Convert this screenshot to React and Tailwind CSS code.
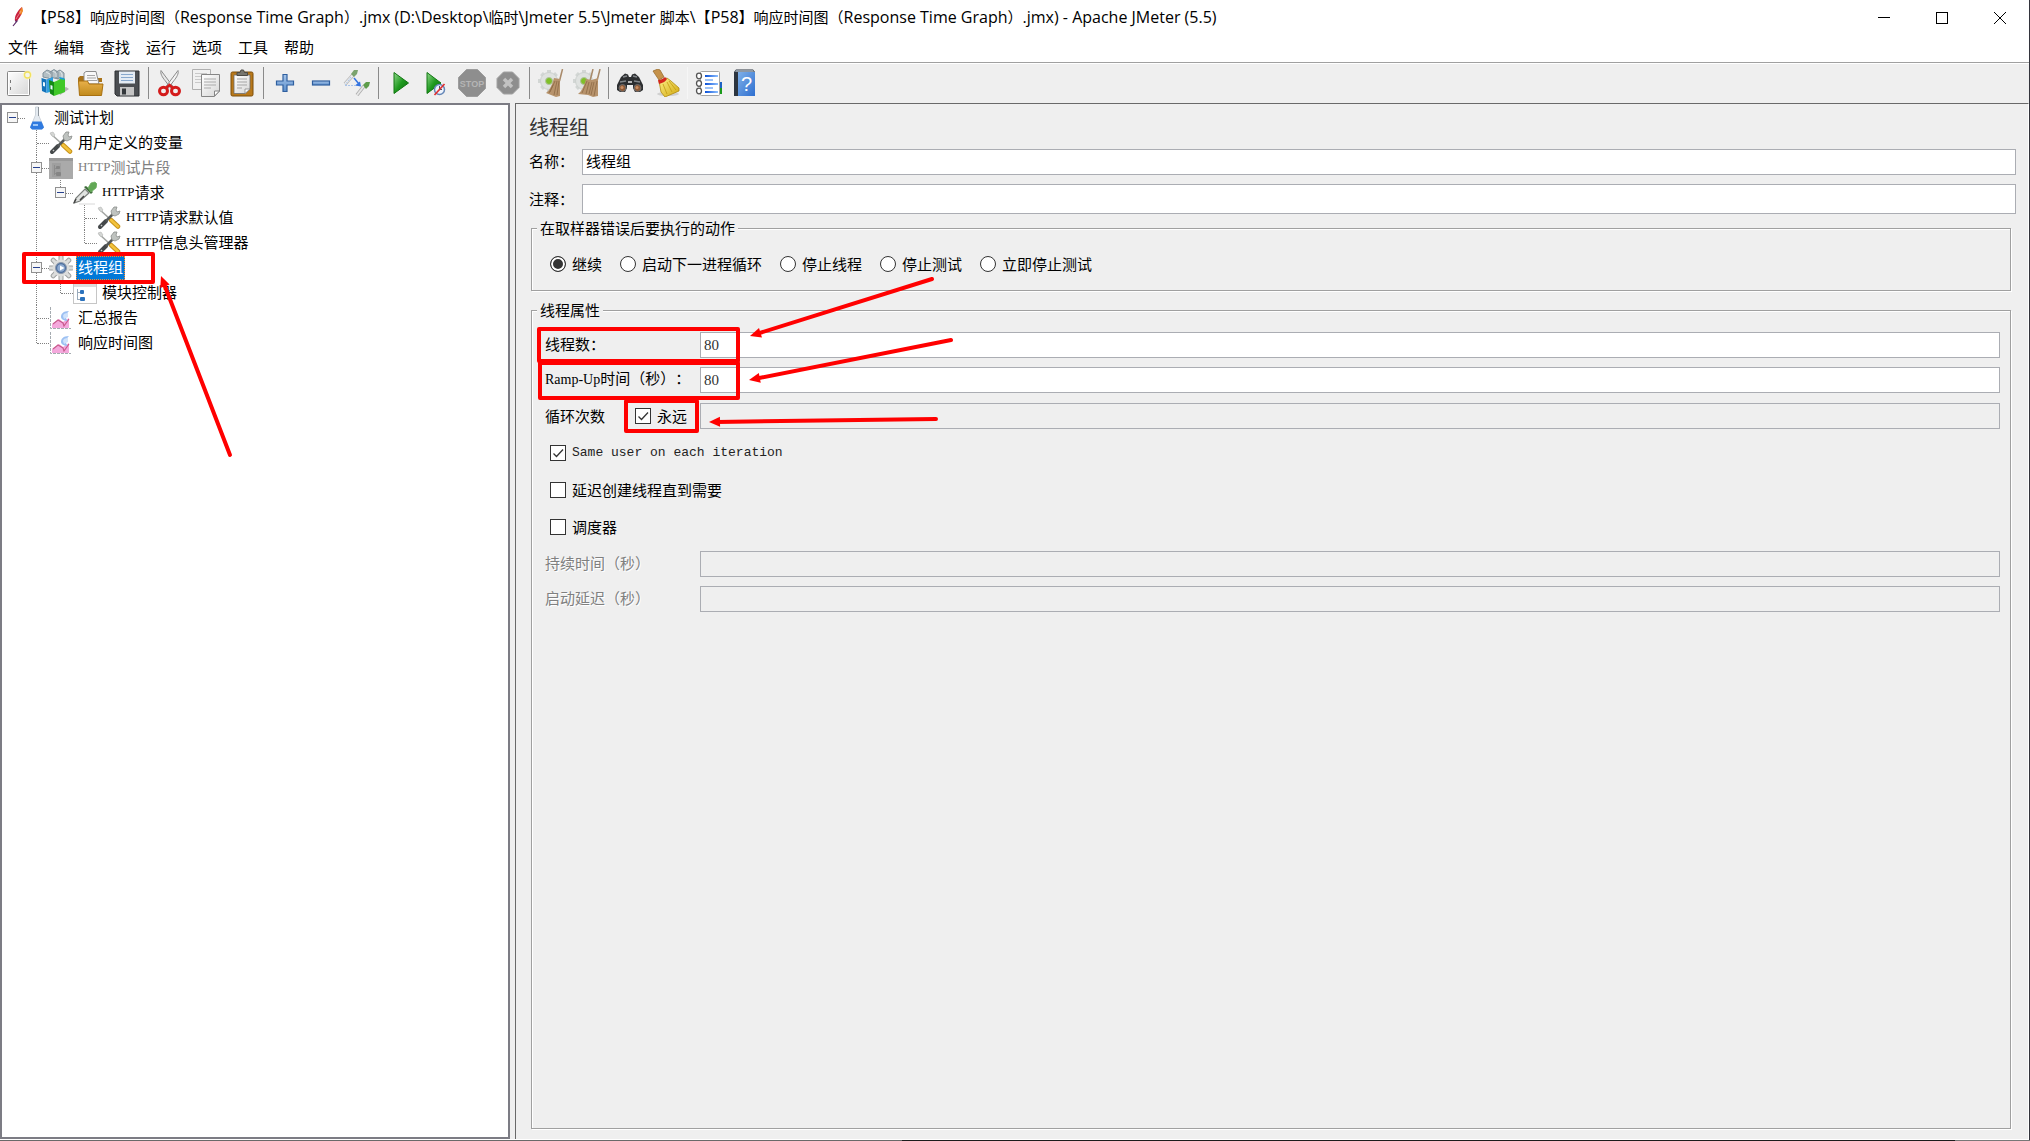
import React from "react";

const CJK = "font-['Noto_Sans_CJK_SC',sans-serif] [text-spacing-trim:space-all]";
const UI = "font-['Open_Sans','Noto_Sans_CJK_SC',sans-serif] [text-spacing-trim:space-all]";

/* ---------- shared gradients ---------- */

function Gradients() {
  return (
    <svg className="absolute h-0 w-0" aria-hidden="true">
      <defs>
        <linearGradient id="paper" x1="0" y1="0" x2="1" y2="1">
          <stop offset="0" stopColor="#ffffff" />
          <stop offset="1" stopColor="#d6d6d6" />
        </linearGradient>
        <linearGradient id="orange" x1="0" y1="0" x2="0" y2="1">
          <stop offset="0" stopColor="#e8b04a" />
          <stop offset="1" stopColor="#c08a1c" />
        </linearGradient>
        <linearGradient id="green" x1="0" y1="0" x2="1" y2="1">
          <stop offset="0" stopColor="#8fd68a" />
          <stop offset="0.5" stopColor="#1f9a1f" />
          <stop offset="1" stopColor="#0b6b0b" />
        </linearGradient>
        <linearGradient id="blue" x1="0" y1="0" x2="0" y2="1">
          <stop offset="0" stopColor="#a8c6ea" />
          <stop offset="1" stopColor="#5b8ecb" />
        </linearGradient>
        <linearGradient id="book" x1="0" y1="0" x2="1" y2="1">
          <stop offset="0" stopColor="#7eb0e8" />
          <stop offset="1" stopColor="#2f6fd0" />
        </linearGradient>
        <linearGradient id="yellow" x1="0" y1="0" x2="1" y2="1">
          <stop offset="0" stopColor="#fdf08a" />
          <stop offset="1" stopColor="#d2a80c" />
        </linearGradient>
        <linearGradient id="bar" x1="0" y1="0" x2="1" y2="0">
          <stop offset="0" stopColor="#0a50d8" />
          <stop offset="1" stopColor="#8fc0ff" />
        </linearGradient>
      </defs>
    </svg>
  );
}

/* ---------- toolbar icons, 28 x 28 ---------- */

function Svg({ children, size = 28 }) {
  return (
    <svg
      viewBox={`0 0 ${size} ${size}`}
      width={size}
      height={size}
      className="block shrink-0"
      fill="none"
      aria-hidden="true"
    >
      {children}
    </svg>
  );
}

const NewIcon = () => (
  <Svg>
    <rect x="2.500" y="2.500" width="22" height="24" rx="1" fill="url(#paper)" stroke="#858585" />
    <rect x="3.500" y="3.500" width="20" height="22" stroke="#fff" />
    <path d="M5.500 11v3M5.500 18v3" stroke="#777" />
    <circle cx="22.500" cy="6" r="4.500" fill="#fff7b0" opacity="0.700" />
    <circle cx="22.500" cy="6" r="3" fill="#f4f4ea" stroke="#f0e060" strokeWidth="1.300" />
  </Svg>
);

const TemplatesIcon = () => (
  <Svg>
    <path d="M17 22l8-4 3 2-9 6z" fill="#8a8a8a" opacity="0.600" />
    <path d="M2 8V4l4-3 5 2v7zM9 8V3l4-2.500L17 3v7zM15 9V3l4-2 4 3v8z" fill="#b3bfc4" stroke="#80909a" />
    <path d="M5 3l4 2v4M12 2l3 2v4M19 2l2 3v4" stroke="#e4eaed" />
    <path d="M.500 9l5 1.500V24L1 22z" fill="#1272ba" />
    <path d="M5.500 10.500L12 8v14l-6.500 2z" fill="#2f9ee0" />
    <path d="M8 11l5 2v14l-4-2.500z" fill="#148a14" />
    <path d="M13 13l9-4 2 1v13l-11 4z" fill="#40c828" />
    <path d="M18 8l5 1 1 2-5-1z" fill="#1d9ad8" />
    <path d="M2 13l2 .500v4L2 17zM9.500 16l2 .700v4l-2-.700z" fill="#e9f8ff" />
  </Svg>
);

const OpenIcon = () => (
  <Svg>
    <path d="M1 9l2-2h7v5H1zM20 9h5v4h-5z" fill="#a9731a" />
    <path d="M7 15V4l2-1.500h10l3 12.500z" fill="#f8f8f8" stroke="#8d8d8d" />
    <path d="M10 6.500h8M10 9h9M10 11.500h10" stroke="#a5a5a5" />
    <path d="M1.500 12h9l1.500 3h14l-1.500 11.500h-22z" fill="url(#orange)" stroke="#a87010" />
  </Svg>
);

const SaveIcon = () => (
  <Svg>
    <path d="M2 2h24v25H4l-2-2z" fill="#4b4e52" stroke="#2c2f32" />
    <rect x="6" y="2.500" width="16" height="12" fill="#e4ebf3" />
    <path d="M8 5.500h12M8 8.500h12M8 11.500h12" stroke="#88a8cc" />
    <rect x="7" y="18" width="14" height="8.500" fill="#c4c4c4" />
    <rect x="9" y="19.500" width="4" height="6" fill="#33373b" />
  </Svg>
);

const CutIcon = () => (
  <Svg>
    <path d="M5 1.500c-1 3 1.500 7 4 10l6 8 2-2z" fill="#e8e8e8" stroke="#8b8b8b" />
    <path d="M22 1.500c1 3-1.500 7-4 10l-6 8-2-2z" fill="#f4f4f4" stroke="#8b8b8b" />
    <ellipse cx="7.500" cy="22" rx="4" ry="3.800" stroke="#d41c1c" strokeWidth="3" />
    <ellipse cx="19.500" cy="22" rx="4" ry="3.800" stroke="#d41c1c" strokeWidth="3" />
    <path d="M10 19l3.500-3 3.500 3" stroke="#d41c1c" strokeWidth="2.500" />
  </Svg>
);

const CopyIcon = () => (
  <Svg>
    <path d="M.500.500h18v20H.500z" fill="#f1f1f1" stroke="#b0b0b0" />
    <path d="M3 4.500h12M3 7.500h6M3 10.500h6M3 13.500h6" stroke="#c9c9c9" />
    <path d="M9.500 5.500h18V22l-5 5.500h-13z" fill="url(#paper)" stroke="#858585" />
    <path d="M12 10h12M12 13h12M12 16h12M12 19h7" stroke="#aaa" />
    <path d="M22.500 27v-5h5z" fill="#fff" stroke="#858585" />
  </Svg>
);

const PasteIcon = () => (
  <Svg>
    <rect x="3" y="3" width="22" height="24" rx="1.500" fill="#b8781a" stroke="#7d4e0b" />
    <path d="M6 6h16v14l-5 4.500H6z" fill="url(#paper)" stroke="#6d6d6d" strokeWidth="0.800" />
    <path d="M9 10h10M9 13h10M9 16h10M9 19h5" stroke="#a5a5a5" />
    <path d="M9 6.500V3.500h3l1-2.500h2.500l1 2.500h3v3z" fill="#77766f" stroke="#4c4b46" />
    <path d="M17 24.500V20h5z" fill="#fff" stroke="#888" strokeWidth="0.800" />
  </Svg>
);

const PlusIcon = () => (
  <Svg>
    <path d="M12 5.500h4V12h6.500v4H16v6.500h-4V16H5.500v-4H12z" fill="url(#blue)" stroke="#2f5f9f" strokeWidth="1.200" />
  </Svg>
);

const MinusIcon = () => (
  <Svg>
    <rect x="5.500" y="12" width="17" height="4" fill="url(#blue)" stroke="#2f5f9f" strokeWidth="1.200" />
  </Svg>
);

const ToggleIcon = () => (
  <Svg>
    <g opacity="0.550">
      <path d="M2 15l8-9" stroke="#888" strokeWidth="3.500" />
      <path d="M2 15l8-9" stroke="#eee" strokeWidth="2" />
    </g>
    <path d="M8 5l3-4h4l-1 4-3 3z" fill="#7ba36d" />
    <path d="M14 26l7-9" stroke="#aaa" strokeWidth="3.500" />
    <path d="M14 26l7-9" stroke="#e6e6e6" strokeWidth="2" />
    <path d="M20 16l3-3h4l-1 4-3 3z" fill="#5d9c4a" />
    <path d="M2 16.500h10M8 8l-6 8" stroke="#a9c4ea" strokeDasharray="2 1" />
    <path d="M11 9l5 6" stroke="#3474e0" strokeWidth="1.500" />
    <path d="M18 17.500l-6-1 5-4z" fill="#3474e0" />
  </Svg>
);

const StartIcon = () => (
  <Svg>
    <path d="M8 3.500L22.500 14 8 24.500z" fill="url(#green)" stroke="#117711" />
  </Svg>
);

const StartNoTimersIcon = () => (
  <Svg>
    <path d="M5 3.500L19 14 5 24.500z" fill="url(#green)" stroke="#117711" />
    <circle cx="17.500" cy="20.500" r="5" fill="#eef3fb" stroke="#6688b8" strokeWidth="1.500" />
    <path d="M17.500 17v3.500h2.500" stroke="#456" />
    <path d="M12.500 26l10-11" stroke="#e03030" strokeWidth="1.700" />
  </Svg>
);

const StopIcon = () => (
  <Svg>
    <path d="M8.500.500h11l8 8v11l-8 8h-11l-8-8v-11z" fill="#8e8e8e" stroke="#9d9d9d" />
    <text x="14" y="18" textAnchor="middle" fontSize="9" fontWeight="700" fill="#b5b5b5" fontFamily="Liberation Sans, sans-serif">
      STOP
    </text>
  </Svg>
);

const ShutdownIcon = () => (
  <Svg>
    <path d="M9.500 3h9l6.500 6.500v9L18.500 25h-9L3 18.500v-9z" fill="#8e8e8e" stroke="#a2a2a2" />
    <path d="M10 10l8 8M18 10l-8 8" stroke="#c2c2c2" strokeWidth="3.500" />
  </Svg>
);

function PaleGear({ x = 0 }) {
  return (
    <g transform={`translate(${x} 0)`}>
      <g stroke="#d2d6d4" strokeWidth="4">
        <path d="M12 1v22M1 12h22M4.500 4.500l15 15M19.500 4.500l-15 15" />
      </g>
      <circle cx="12" cy="12" r="8.500" fill="#dfe2e0" stroke="#cdd1cf" />
      <circle cx="12" cy="12" r="3.500" fill="#7fc028" stroke="#b2c3a0" />
    </g>
  );
}

const ClearIcon = () => (
  <Svg>
    <PaleGear />
    <path d="M25.500 0l-3 12" stroke="#a88a6a" strokeWidth="1.500" />
    <path d="M17 9l6 1v17l-4 1-10-4c4-3 6-8 8-15z" fill="#b7936c" />
    <path d="M18 12l-5 11M20 12l-3 14M22 12l-2 14M16 16l-4 8" stroke="#8d6a45" strokeWidth="0.800" />
  </Svg>
);

const ClearAllIcon = () => (
  <Svg>
    <PaleGear x={-1} />
    <path d="M20 0l-3 12M27 0l-3 12" stroke="#a88a6a" strokeWidth="1.500" />
    <path d="M13 10l6 1 6-2v18l-5 1-5-2-10-1c4-3 6-8 8-15z" fill="#b7936c" />
    <path d="M14 12l-5 12M16 13l-3 12M21 13l-3 13M24 12l-3 15M19 13l-3 12" stroke="#8d6a45" strokeWidth="0.800" />
  </Svg>
);

const SearchIcon = () => (
  <Svg>
    <path d="M5 8l4-3.500 3 1 1 2.500h2l1-2.500 3-1L23 8l4 8v5l-3 2h-5l-2-4v-3h-6v3l-2 4H4l-3-2v-5z" fill="#2d2f31" />
    <path d="M7 8l4-1M17 7l4 1M4 13l6-1M18 12l6 1" stroke="#84888b" strokeWidth="1.500" />
    <path d="M12 13h4" stroke="#b5b5b5" strokeWidth="2" />
    <circle cx="6.500" cy="19" r="3.500" fill="#8e5a36" stroke="#6a6c6e" />
    <circle cx="21.500" cy="19" r="3.500" fill="#8e5a36" stroke="#6a6c6e" />
    <circle cx="6" cy="18.500" r="1.500" fill="#c98d62" />
    <circle cx="21" cy="18.500" r="1.500" fill="#c98d62" />
  </Svg>
);

const BroomIcon = () => (
  <Svg>
    <ellipse cx="16" cy="25" rx="11" ry="2" fill="#999" opacity="0.350" />
    <path d="M1 2l5-2 2 1 4 7-5 3z" fill="#c5924a" stroke="#9a6e30" strokeWidth="0.800" />
    <path d="M7 12l8-3 4 3 8 7v3l-7 3-7 3-4-5z" fill="url(#yellow)" stroke="#b08a10" strokeWidth="0.800" />
    <path d="M6 11c3 0 5-1 7-3l2 2c-1 2-4 4-8 5z" fill="#d3261c" />
    <path d="M11 15l4 10M15 13l5 10M17 12l7 9" stroke="#c19a12" strokeWidth="0.800" />
  </Svg>
);

const FunctionIcon = () => (
  <Svg>
    <path d="M24 13h3v6h-3z" fill="#1c62c4" />
    <path d="M24 19h3v6h-3z" fill="#1a9a1a" />
    <rect x="5.500" y="2.500" width="19" height="24" rx="1" fill="#fff" stroke="#a5a5a5" />
    <path d="M10 6h13v2H10zM10 14h13v2H10zM10 22h13v2H10z" fill="url(#bar)" />
    <path d="M10 11h8M10 19h8" stroke="#3c86f0" strokeWidth="1.200" />
    {[7, 14.500, 22].map((y) => (
      <ellipse key={y} cx="4" cy={y} rx="2.500" ry="2.800" fill="#fff" stroke="#555" strokeWidth="1.300" />
    ))}
  </Svg>
);

const HelpIcon = () => (
  <Svg>
    <path d="M3 3l2-2.500h17L24 3v23l-1 1H3z" fill="#2c3540" />
    <path d="M4 3l1-2h17l1 2z" fill="#8d98a4" />
    <rect x="7" y="3" width="17" height="24" fill="url(#book)" />
    <text x="15.500" y="22" textAnchor="middle" fontSize="20" fill="#ffffff" fontFamily="Liberation Sans, sans-serif">
      ?
    </text>
  </Svg>
);

/* ---------- tree icons, 24 x 24 ---------- */

const FlaskIcon = () => (
  <Svg size={24}>
    <path d="M10.500 1h3v8l5 12-1.500 2h-10l-1.500-2 5-12z" fill="#e4eaf0" stroke="#ccd3da" />
    <path d="M7.500 15.500h9l2.500 6-2 2H7l-2-2z" fill="#2f7ae0" />
    <path d="M8 19h5" stroke="#9cc6f8" strokeWidth="2" />
    <path d="M13.500 1v9" stroke="#8d959d" />
  </Svg>
);

const ToolsIcon = () => (
  <Svg size={24}>
    <path d="M2 3l11 10" stroke="#a2a5a2" strokeWidth="1.600" />
    <path d="M1 2l3-1 2 3-2 2z" fill="#d5d7d5" stroke="#b3b6b3" strokeWidth="0.600" />
    <path d="M14 14l7 6.500" stroke="#c8931a" strokeWidth="4.500" strokeLinecap="round" />
    <path d="M14 14l7 6.500" stroke="#f3c33c" strokeWidth="2.500" strokeLinecap="round" />
    <path d="M3 21l6-6" stroke="#44484a" strokeWidth="4" strokeLinecap="round" />
    <path d="M9 15l8-8" stroke="#55595a" strokeWidth="2.500" />
    <path d="M4 20l1-1" stroke="#c9cccb" strokeWidth="1.500" />
    <path d="M15 9l-1-4 3-4h3l-1 3 1 2 3-1-1 3-4 2z" fill="#bfc3c0" stroke="#8a8e8b" strokeWidth="0.800" />
  </Svg>
);

const FragmentIcon = () => (
  <Svg size={24}>
    <rect x="0" y="2" width="24" height="21" fill="#aaaaaa" />
    <rect x="0" y="2" width="24" height="3" fill="#999" />
    <rect x="3" y="7" width="9" height="14" fill="#9f9f9f" />
    <path d="M5.500 9v10M5.500 12.500H8M5.500 17.500H8" stroke="#8d8d8d" />
    <rect x="7" y="10" width="4" height="3" rx="1" fill="#858585" />
    <rect x="7" y="16" width="5" height="4" rx="1" fill="#858585" />
  </Svg>
);

const ModuleIcon = () => (
  <Svg size={24}>
    <rect x="0.500" y="2.500" width="23" height="20" fill="#fff" stroke="#c6c6c6" />
    <rect x="1" y="3" width="22" height="3" fill="#dcdcdc" />
    <path d="M4.500 8v11M4.500 11.500H7M4.500 18.500H7" stroke="#9ab" />
    <rect x="7" y="9" width="4" height="4" rx="1" fill="#2b72bd" />
    <rect x="7" y="16" width="5" height="4" rx="1" fill="#2b72bd" />
  </Svg>
);

const SamplerIcon = () => (
  <Svg size={24}>
    <path d="M6 23h16" stroke="#d8d8d8" />
    <path d="M1 22l2-5 9-9 4 4-9 8z" fill="#e0e2e0" stroke="#7a7e7b" strokeWidth="1.200" />
    <path d="M1 22l2-4M7 19l4-4" stroke="#444" strokeWidth="1.500" />
    <path d="M11 6l7 7 2-2-7-6z" fill="#3f6d3a" />
    <path d="M15 7l3-5 4-1 2 2-1 4-5 4z" fill="#62a856" stroke="#6fae62" strokeWidth="0.800" />
  </Svg>
);

const GearIcon = () => (
  <Svg size={24}>
    <path
      d="M12 1v22M1 12h22M4.200 4.200l15.600 15.600M19.800 4.200L4.200 19.800"
      stroke="#9da09f"
      strokeWidth="5"
      strokeLinecap="round"
    />
    <path
      d="M12 1v22M1 12h22M4.200 4.200l15.600 15.600M19.800 4.200L4.200 19.800"
      stroke="#dcdddc"
      strokeWidth="3"
      strokeLinecap="round"
    />
    <circle cx="12" cy="12" r="8.500" fill="#dcdddc" />
    <circle cx="12" cy="12" r="5.500" fill="#4c6f9f" stroke="#8c99ac" />
    <circle cx="12" cy="12" r="3.800" fill="#8fabd0" />
    <path d="M11 9.500l4.500 2.500-4.500 2.500z" fill="#fff" />
  </Svg>
);

const ChartIcon = () => (
  <Svg size={24}>
    <path d="M1.500 1v21.500H22" stroke="#a5abb0" strokeDasharray="3 1" />
    <path d="M3 22v-4l7-5 4 3 6-4v10z" fill="#f4a8dc" />
    <path d="M20 5c-6 0-8 3-8 6 0 2 3 4 7 4-3-3-3-6 1-10z" fill="#9cc0f2" />
    <path d="M14 10c0-2 2-3 5-3v4l-4 2z" fill="#cfe2fb" />
    <path d="M4 18l5-4 5 3 1 3 5-7" stroke="#c85a8c" strokeWidth="1.200" />
  </Svg>
);

/* ---------- window chrome ---------- */

const FeatherIcon = () => (
  <svg viewBox="0 0 16 20" className="h-5 w-4 shrink-0" fill="none" aria-hidden="true">
    <path d="M5 14c-1-4 2-10 7-14 1 4 0 8-5 14z" fill="#c9203f" />
    <path d="M9 5l3-5 1 4-2 4z" fill="#f08a24" />
    <path d="M5 14l2 0-4 5" stroke="#5b2a68" strokeWidth="1.200" />
    <path d="M6 12L11 4" stroke="#f4a9a0" strokeWidth="0.700" />
  </svg>
);

const TITLE =
  "【P58】响应时间图（Response Time Graph）.jmx (D:\\Desktop\\临时\\Jmeter 5.5\\Jmeter 脚本\\【P58】响应时间图（Response Time Graph）.jmx) - Apache JMeter (5.5)";

/* Latin runs are set one pixel larger than the Chinese ones. */
function TitleText({ text }) {
  return text.split(/([\x20-\x7e]+)/).map((run, i) =>
    i % 2 ? (
      <span key={i} className="text-[16px]">
        {run}
      </span>
    ) : (
      run
    ),
  );
}

function TitleBar() {
  const control = "flex h-full w-[58px] items-center justify-center";
  return (
    <header className="flex h-[35px] shrink-0 items-center bg-white">
      <div className="flex h-full min-w-0 flex-1 items-center gap-[6px] pb-[2px] pl-[10px]">
        <FeatherIcon />
        <h1 className={`${UI} truncate text-[15px] leading-6 text-black`}>
          <TitleText text={TITLE} />
        </h1>
      </div>
      <div className="flex h-full items-center">
        <button type="button" aria-label="最小化" className={control}>
          <svg width="12" height="12" stroke="#000" aria-hidden="true">
            <path d="M0 5.500h12" />
          </svg>
        </button>
        <button type="button" aria-label="最大化" className={control}>
          <svg width="12" height="12" stroke="#000" fill="none" aria-hidden="true">
            <rect x="0.500" y="0.500" width="11" height="11" />
          </svg>
        </button>
        <button type="button" aria-label="关闭" className={control}>
          <svg width="12" height="12" stroke="#000" aria-hidden="true">
            <path d="M0 0l12 12M12 0L0 12" />
          </svg>
        </button>
      </div>
    </header>
  );
}

function MenuBar() {
  return (
    <nav className="flex h-[27px] shrink-0 items-center gap-4 bg-white pb-[3px] pl-2">
      {["文件", "编辑", "查找", "运行", "选项", "工具", "帮助"].map((name) => (
        <button key={name} type="button" className={`${CJK} text-[15px] leading-5 text-black`}>
          {name}
        </button>
      ))}
    </nav>
  );
}

const TOOL_GROUPS = [
  [["新建", NewIcon], ["模板", TemplatesIcon], ["打开", OpenIcon], ["保存", SaveIcon]],
  [["剪切", CutIcon], ["复制", CopyIcon], ["粘贴", PasteIcon]],
  [["展开", PlusIcon], ["收起", MinusIcon], ["切换", ToggleIcon]],
  [["启动", StartIcon], ["不停顿开始", StartNoTimersIcon], ["停止", StopIcon, true], ["关闭线程", ShutdownIcon, true]],
  [["清除", ClearIcon], ["清除全部", ClearAllIcon]],
  [["搜索", SearchIcon], ["重置搜索", BroomIcon]],
  [["函数助手", FunctionIcon], ["帮助文档", HelpIcon]],
];

function ToolBar() {
  return (
    <div
      role="toolbar"
      className="flex h-[41px] shrink-0 items-center gap-[7px] border-t border-[#a0a0a0] bg-[#efefef] pl-[5px] shadow-[inset_0_1px_0_white]"
    >
      {TOOL_GROUPS.map((group, i) => (
        <React.Fragment key={i}>
          {i > 0 && <div className={i === 6 ? "h-8 w-px bg-[#f6f6f6]" : "h-8 w-px bg-[#8a8a8a]"} />}
          <div className="flex items-center gap-2">
            {group.map(([name, Icon, disabled]) => (
              <button key={name} type="button" aria-label={name} disabled={disabled}>
                <Icon />
              </button>
            ))}
          </div>
        </React.Fragment>
      ))}
    </div>
  );
}

/* ---------- test plan tree ---------- */

/* guides: one entry per 24px column; r = root, v = passing line, t = branch, l = last branch, n or space = empty */
const TREE = [
  { label: "测试计划", guides: "r", open: true, icon: FlaskIcon },
  { label: "用户定义的变量", guides: " t", icon: ToolsIcon },
  { latin: "HTTP", label: "测试片段", guides: " t", open: true, icon: FragmentIcon, disabled: true },
  { latin: "HTTP", label: "请求", guides: " vl", open: true, icon: SamplerIcon },
  { latin: "HTTP", label: "请求默认值", guides: " vnt", icon: ToolsIcon },
  { latin: "HTTP", label: "信息头管理器", guides: " vnl", icon: ToolsIcon },
  { label: "线程组", guides: " t", open: true, icon: GearIcon, selected: true },
  { label: "模块控制器", guides: " vl", icon: ModuleIcon },
  { label: "汇总报告", guides: " t", icon: ChartIcon },
  { label: "响应时间图", guides: " l", icon: ChartIcon },
];

function GuideCell({ kind, open }) {
  const vertical = kind === "v" || kind === "t" ? "h-full" : kind === "l" ? "h-1/2" : "h-0";
  const branch = kind === "t" || kind === "l" || kind === "r";
  return (
    <div className="relative h-full w-6 shrink-0">
      <div className={`absolute top-0 left-[11px] border-l border-dotted border-[#808080] ${vertical}`} />
      {branch && <div className="absolute top-1/2 right-0 w-3 border-t border-dotted border-[#808080]" />}
      {open && (
        <button
          type="button"
          aria-label="折叠"
          className="absolute top-[7px] left-[6px] flex h-[11px] w-[11px] items-center justify-center border border-[#919191] bg-[#f6f6f6]"
        >
          <span className="h-px w-[7px] bg-[#26418f]" />
        </button>
      )}
    </div>
  );
}

function TreeRow({ node }) {
  const Icon = node.icon;
  const cells = node.guides.split("");
  const text = node.disabled ? "text-[#808080]" : node.selected ? "text-white" : "text-black";
  const box = node.selected ? "bg-[#0078d7] outline-1 -outline-offset-1 outline-dotted outline-[#ff8728]" : "";
  return (
    <li className="flex h-[25px] items-center">
      {cells.map((kind, i) => (
        <GuideCell key={i} kind={kind} open={node.open && i === cells.length - 1} />
      ))}
      <Icon />
      <span className={`ml-[3px] flex h-6 items-center px-[2px] pb-[2px] text-[15px] leading-[22px] whitespace-nowrap ${CJK} ${text} ${box}`}>
        {node.latin && <span className="font-['Liberation_Serif',serif] text-[13px]">{node.latin}</span>}
        {node.label}
      </span>
    </li>
  );
}

function TreePanel() {
  return (
    <aside className="w-[510px] shrink-0 border-2 border-[#7c7c84] bg-white">
      <ul className="-ml-px">
        {TREE.map((node, i) => (
          <TreeRow key={i} node={node} />
        ))}
      </ul>
    </aside>
  );
}

/* ---------- thread group form ---------- */

const FIELD = "min-w-0 flex-1 rounded-none border border-[#abadb3] px-[3px] outline-none";
const LABEL = "text-[15px] leading-5 whitespace-nowrap";
const ETCHED = "border border-[#a0a0a0] shadow-[1px_1px_0_white,inset_1px_1px_0_white]";

function Radio({ label, checked }) {
  return (
    <label className="flex items-center gap-[6px]">
      <input
        type="radio"
        name="on-error"
        defaultChecked={checked}
        className="h-4 w-4 shrink-0 appearance-none rounded-full border border-[#333] bg-white checked:bg-[#333] checked:shadow-[inset_0_0_0_2px_white]"
      />
      <span className={LABEL}>{label}</span>
    </label>
  );
}

function Check({ label, checked, latin }) {
  return (
    <label className="flex items-center gap-[6px]">
      <span className="relative flex h-4 w-4 shrink-0">
        <input
          type="checkbox"
          defaultChecked={checked}
          className="peer h-4 w-4 appearance-none border border-[#333] bg-white"
        />
        <svg
          viewBox="0 0 16 16"
          className="pointer-events-none absolute inset-0 hidden h-4 w-4 peer-checked:block"
          fill="none"
          stroke="#333"
          strokeWidth="1.300"
          aria-hidden="true"
        >
          <path d="M3.500 8.500l3 3L13 4.500" />
        </svg>
      </span>
      <span className={latin ? "font-['Liberation_Mono',monospace] text-[13px] leading-5 text-[#222]" : LABEL}>{label}</span>
    </label>
  );
}

function PropertyRow({ id, latin, label, value, disabled }) {
  return (
    <div className="flex items-center">
      <label
        htmlFor={id}
        className={`w-[155px] shrink-0 pb-[3px] ${LABEL} ${disabled ? "text-[#808080] [text-shadow:1px_1px_0_white]" : "text-black"}`}
      >
        {latin && <span className="font-['Liberation_Serif',serif] text-[14px]">{latin}</span>}
        {label}
      </label>
      <input
        id={id}
        type="text"
        defaultValue={value}
        disabled={disabled}
        className={`h-[26px] font-['Liberation_Serif',serif] text-[15px] text-[#333] ${FIELD} ${disabled ? "bg-[#efefef]" : "bg-white"}`}
      />
    </div>
  );
}

function ThreadGroupPanel() {
  return (
    <main
      className={`${CJK} ml-[5px] flex min-w-0 flex-1 flex-col border-t border-r border-l border-t-[#696969] border-r-white border-l-[#696969] text-black`}
    >
      <h2 className="mt-2 ml-[13px] text-[20px] leading-[30px] text-[#333]">线程组</h2>
      <div className="mt-[7px] mr-3 ml-[13px] flex items-center">
        <label htmlFor="name" className={`w-[53px] pb-[3px] ${LABEL}`}>名称：</label>
        <input id="name" type="text" defaultValue="线程组" className={`h-[26px] bg-white pb-[3px] text-[15px] ${FIELD}`} />
      </div>
      <div className="mt-[9px] mr-3 ml-[13px] flex items-center">
        <label htmlFor="comment" className={`w-[53px] ${LABEL}`}>注释：</label>
        <input id="comment" type="text" defaultValue="" className={`h-[30px] bg-white text-[15px] ${FIELD}`} />
      </div>

      <fieldset className={`mt-1 mr-[17px] ml-[15px] pt-4 pb-4 pl-[18px] ${ETCHED}`}>
        <legend className={`-ml-[13px] bg-[#efefef] px-[3px] ${LABEL}`}>在取样器错误后要执行的动作</legend>
        <div className="flex flex-wrap items-center gap-[18px]">
          <Radio label="继续" checked />
          <Radio label="启动下一进程循环" />
          <Radio label="停止线程" />
          <Radio label="停止测试" />
          <Radio label="立即停止测试" />
        </div>
      </fieldset>

      <fieldset className={`mt-[9px] mr-[17px] mb-[10px] ml-[15px] flex-1 pt-3 pr-[10px] pl-[13px] ${ETCHED}`}>
        <legend className={`-ml-2 bg-[#efefef] px-[3px] ${LABEL}`}>线程属性</legend>
        <div className="flex flex-col gap-[9px]">
          <PropertyRow id="threads" label="线程数：" value="80" />
          <PropertyRow id="ramp" latin="Ramp-Up" label="时间（秒）：" value="80" />
        </div>
        <div className="mt-[10px] flex items-center">
          <label htmlFor="loops" className={`w-[90px] shrink-0 ${LABEL}`}>循环次数</label>
          <div className="w-[65px] shrink-0">
            <Check label="永远" checked />
          </div>
          <input id="loops" type="text" disabled className={`h-[26px] bg-[#efefef] text-[15px] ${FIELD}`} />
        </div>
        <div className="my-[6px] flex flex-col items-start gap-[17px] py-2 pl-[5px]">
          <Check label="Same user on each iteration" checked latin />
          <Check label="延迟创建线程直到需要" />
          <Check label="调度器" />
        </div>
        <div className="flex flex-col gap-[9px]">
          <PropertyRow id="duration" label="持续时间（秒）" disabled />
          <PropertyRow id="delay" label="启动延迟（秒）" disabled />
        </div>
      </fieldset>
    </main>
  );
}

/* ---------- red markup drawn over the window ---------- */

const BOXES = [
  [24, 254, 129, 28],
  [539, 329, 199, 32],
  [540, 363, 198, 35],
  [626, 401, 71, 30],
];

const ARROWS = [
  { from: [230, 455], to: [161, 276] },
  { from: [932, 279], to: [750, 336] },
  { from: [951, 340], to: [749, 380] },
  { from: [936, 419], to: [709, 422] },
];

function Markup() {
  return (
    <svg className="pointer-events-none absolute top-0 left-0 h-full w-full" fill="none" aria-hidden="true">
      {BOXES.map(([x, y, w, h]) => (
        <rect key={y} x={x} y={y} width={w} height={h} stroke="#f00" strokeWidth="4" strokeLinejoin="round" />
      ))}
      {ARROWS.map(({ from, to }) => {
        const angle = (Math.atan2(to[1] - from[1], to[0] - from[0]) * 180) / Math.PI;
        const length = Math.hypot(to[0] - from[0], to[1] - from[1]);
        return (
          <g key={from[0]} transform={`translate(${to[0]} ${to[1]}) rotate(${angle})`}>
            <path d={`M${-length} 0H-8`} stroke="#f00" strokeWidth="4" strokeLinecap="round" />
            <path d="M0 0l-11-5v10z" fill="#f00" />
          </g>
        );
      })}
    </svg>
  );
}

export default function App() {
  return (
    <div className="relative flex h-screen flex-col overflow-hidden bg-[#efefef]">
      <Gradients />
      <div className="flex min-h-0 flex-1 flex-col border-r border-[#33343c]">
        <TitleBar />
        <MenuBar />
        <ToolBar />
        <div className="flex min-h-0 flex-1 border-b border-white">
          <TreePanel />
          <ThreadGroupPanel />
        </div>
      </div>
      <div className="flex h-px shrink-0">
        <div className="w-4/9 bg-[#696969]" />
        <div className="flex-1 bg-[#1c1c1c]" />
        <div className="w-[75px] bg-[#777]" />
      </div>
      <Markup />
    </div>
  );
}
